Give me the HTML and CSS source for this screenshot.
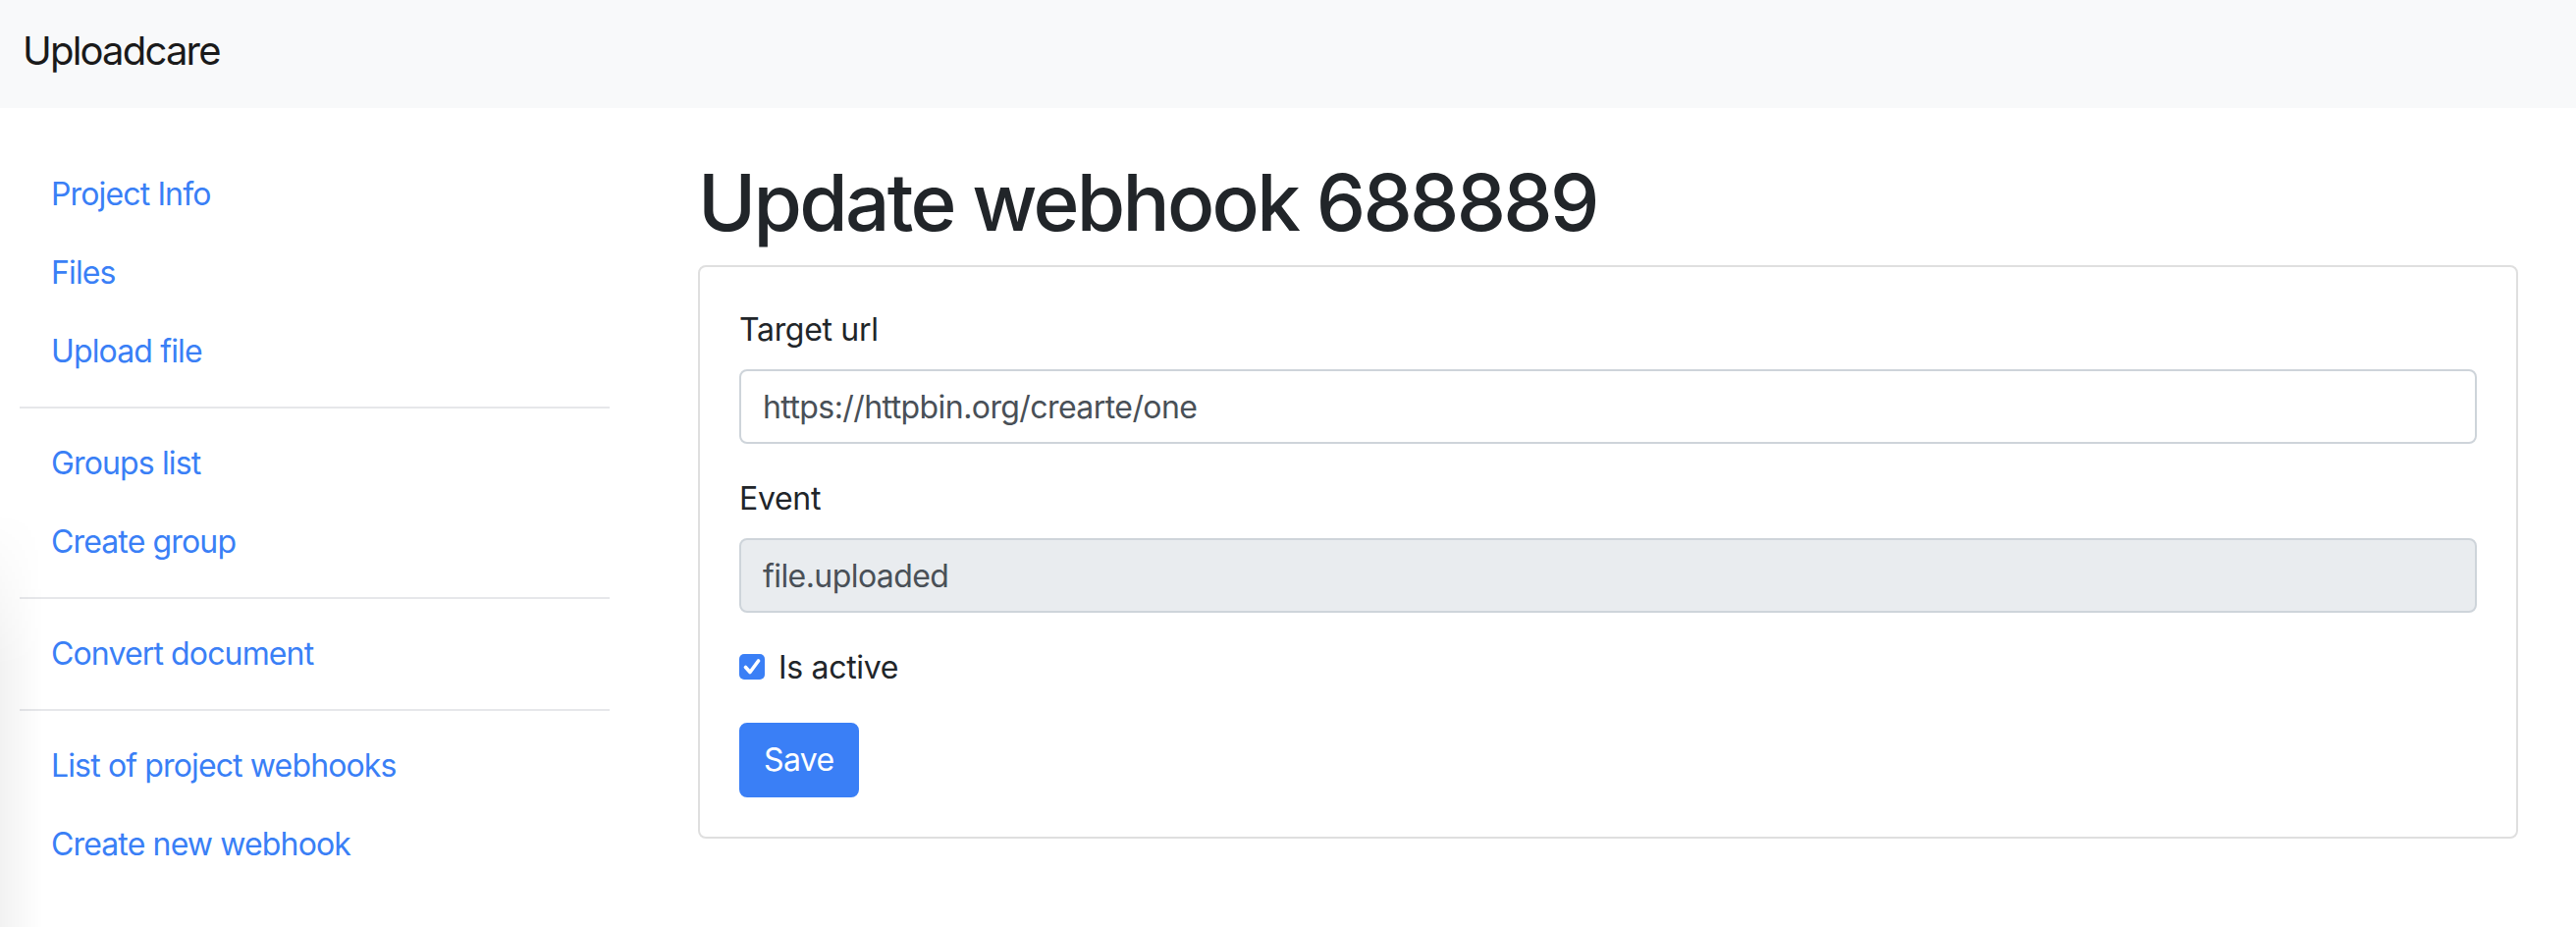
FILE: index.html
```html
<!DOCTYPE html>
<html lang="en">
<head>
<meta charset="utf-8">
<title>Update webhook 688889</title>
<link rel="stylesheet" href="styles.css">
</head>
<body>
<nav class="navbar">
  <a class="brand" href="#">Uploadcare</a>
</nav>
<div class="layout">
  <aside class="sidebar">
    <ul class="nav-list">
      <li><a class="nav-link" href="#">Project Info</a></li>
      <li><a class="nav-link" href="#">Files</a></li>
      <li><a class="nav-link" href="#">Upload file</a></li>
    </ul>
    <hr class="divider">
    <ul class="nav-list">
      <li><a class="nav-link" href="#">Groups list</a></li>
      <li><a class="nav-link" href="#">Create group</a></li>
    </ul>
    <hr class="divider">
    <ul class="nav-list">
      <li><a class="nav-link" href="#">Convert document</a></li>
    </ul>
    <hr class="divider">
    <ul class="nav-list">
      <li><a class="nav-link" href="#">List of project webhooks</a></li>
      <li><a class="nav-link" href="#">Create new webhook</a></li>
    </ul>
  </aside>
  <main class="content">
    <h1 class="title">Update webhook 688889</h1>
    <div class="card">
      <form class="card-body">
        <div class="form-group">
          <label class="form-label" for="target">Target url</label>
          <input class="form-control" id="target" type="text" value="https://httpbin.org/crearte/one">
        </div>
        <div class="form-group">
          <label class="form-label" for="event">Event</label>
          <input class="form-control form-control-readonly" id="event" type="text" value="file.uploaded" readonly>
        </div>
        <div class="form-check">
          <span class="check-box">
            <svg width="26" height="26" viewBox="0 0 26 26"><path d="M6.5 13.5 L11 18.5 L19.5 7" fill="none" stroke="#fff" stroke-width="3.6" stroke-linecap="round" stroke-linejoin="round"/></svg>
          </span>
          <span class="check-label">Is active</span>
        </div>
        <button class="btn" type="button">Save</button>
      </form>
    </div>
  </main>
</div>
</body>
</html>
```

FILE: styles.css
```css
html, body {
  margin: 0;
  padding: 0;
  background: #fff;
}

body {
  font-family: Inter, "Liberation Sans", sans-serif;
  color: #212529;
  letter-spacing: -0.02em;
  min-height: 944px;
  position: relative;
}

body::before {
  content: "";
  position: fixed;
  left: 0;
  top: 520px;
  bottom: 0;
  width: 44px;
  background: linear-gradient(to right, rgba(0, 0, 0, 0.05), rgba(0, 0, 0, 0));
  -webkit-mask-image: linear-gradient(to bottom, transparent 0, #000 160px);
  mask-image: linear-gradient(to bottom, transparent 0, #000 160px);
  pointer-events: none;
}

.navbar {
  height: 110px;
  box-sizing: border-box;
  background: #f8f9fa;
  padding: 30px 23px 0;
}

.brand {
  display: inline-block;
  font-size: 40px;
  line-height: 44px;
  letter-spacing: -0.045em;
  color: #1a1a1a;
  text-decoration: none;
}

.layout {
  display: flex;
  gap: 90px;
  padding: 48px 59px 0 20px;
}

.sidebar {
  width: 601px;
  flex: none;
}

.nav-list {
  list-style: none;
  margin: 0;
  padding: 0;
}

.nav-link {
  display: block;
  padding: 16px 32px;
  font-size: 32px;
  line-height: 48px;
  letter-spacing: -0.027em;
  color: #3a7ff6;
  text-decoration: none;
}

.divider {
  margin: 16px 0;
  height: 0;
  border: 0;
  border-top: 2px solid #e6e7ea;
}

.content {
  flex: 1;
  min-width: 0;
}

.title {
  margin: 0 0 16px;
  font-size: 80px;
  line-height: 96px;
  font-weight: 500;
  letter-spacing: -0.034em;
  color: #212529;
}

.card {
  border: 2px solid #dfdfdf;
  border-radius: 8px;
  background: #fff;
}

.card-body {
  display: block;
  margin: 0;
  padding: 40px;
}

.form-group {
  margin-bottom: 32px;
}

.form-label {
  display: block;
  margin-bottom: 16px;
  font-size: 32px;
  line-height: 48px;
  color: #212529;
}

.form-control {
  display: block;
  width: 100%;
  height: 76px;
  box-sizing: border-box;
  margin: 0;
  padding: 12px 22px;
  font-family: inherit;
  font-size: 32px;
  line-height: 48px;
  letter-spacing: -0.018em;
  color: #495057;
  background: #fff;
  border: 2px solid #ced4da;
  border-radius: 8px;
  outline: none;
}

.form-control-readonly {
  background: #e9ecef;
}

.form-check {
  display: flex;
  align-items: center;
  gap: 14px;
  margin-bottom: 32px;
  font-size: 32px;
  line-height: 48px;
  color: #212529;
}

.check-box {
  display: flex;
  width: 26px;
  height: 26px;
  border-radius: 5px;
  background: #3a7ff6;
  margin-top: -2px;
}

.btn {
  display: inline-block;
  margin: 0;
  height: 76px;
  padding: 12px 23px;
  font-family: inherit;
  font-size: 32px;
  line-height: 48px;
  letter-spacing: -0.02em;
  color: #fff;
  background: #3a7ff6;
  border: 2px solid #3a7ff6;
  border-radius: 8px;
  cursor: pointer;
}
```
